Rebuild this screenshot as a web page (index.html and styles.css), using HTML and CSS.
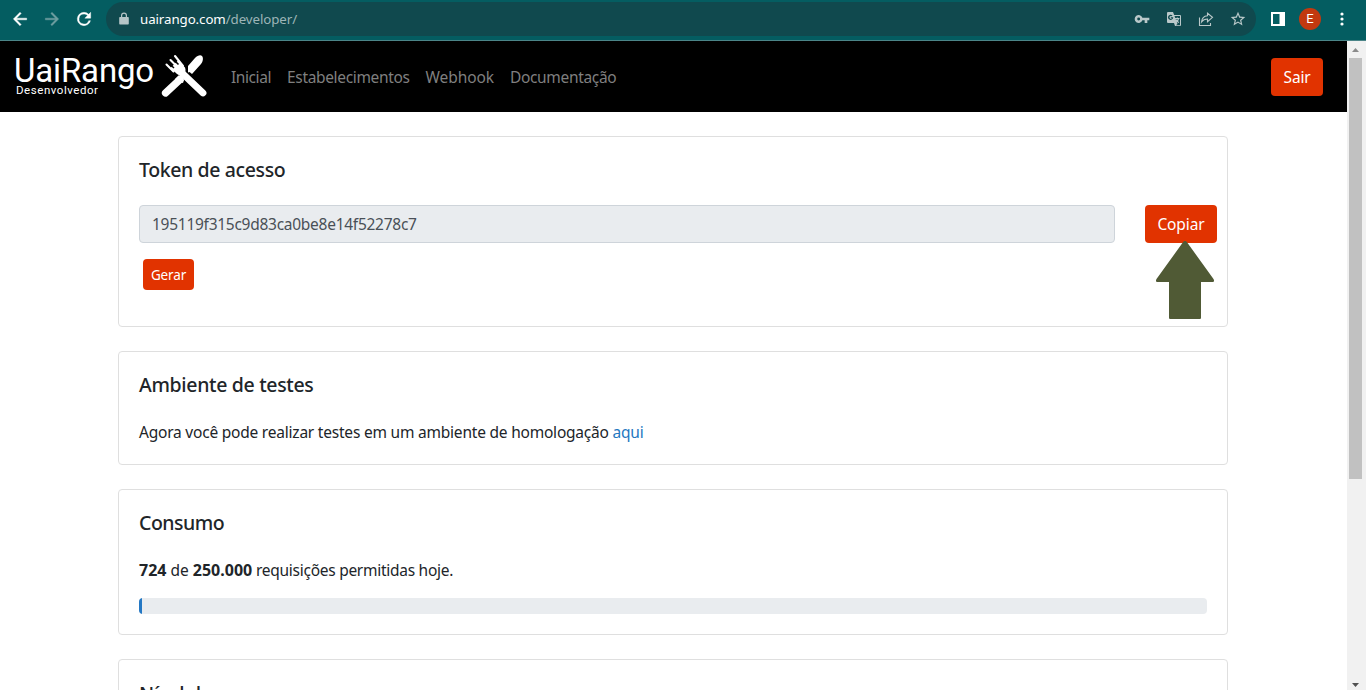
FILE: index.html
```
<!DOCTYPE html>
<html lang="pt-BR">
<head>
<meta charset="utf-8">
<title>UaiRango Desenvolvedor</title>
<link rel="stylesheet" href="styles.css">
</head>
<body>
<header class="browser">
  <svg class="ico" viewBox="0 0 24 24"><path d="M20 11H7.8l5.6-5.6L12 4l-8 8 8 8 1.4-1.4L7.8 13H20z"/></svg>
  <svg class="ico dim" viewBox="0 0 24 24"><path d="M4 11h12.2l-5.6-5.6L12 4l8 8-8 8-1.4-1.4 5.6-5.6H4z"/></svg>
  <svg class="ico" viewBox="0 0 24 24"><path d="M17.65 6.35A7.96 7.96 0 0 0 12 4a8 8 0 1 0 7.73 10h-2.08A6 6 0 1 1 12 6c1.66 0 3.14.69 4.22 1.78L13 11h7V4z"/></svg>
  <div class="address">
    <svg class="lock" viewBox="0 0 10 14"><path d="M1.2 5H2V3.6a3 3 0 0 1 6 0V5h.8c.6 0 1 .4 1 1v5.4c0 .6-.4 1-1 1H1.2c-.6 0-1-.4-1-1V6c0-.6.4-1 1-1zm2 0h3.600V3.600a1.800 1.800 0 0 0-3.600 0z"/></svg>
    <span class="url"><span class="host">uairango.com</span>/developer/</span>
    <div class="tools">
      <svg viewBox="0 0 24 24"><path d="M12.65 10A6 6 0 1 0 12.65 14H16v4h4v-4h3v-4zM7 14.200a2.200 2.200 0 1 1 0-4.400 2.200 2.200 0 0 1 0 4.400z"/></svg>
      <svg viewBox="0 0 16 16"><path fill-rule="evenodd" d="M2 1h5l1.200 3H14a1 1 0 0 1 1 1v9a1 1 0 0 1-1 1H9l-1-3H2a1 1 0 0 1-1-1V2a1 1 0 0 1 1-1zm6.500 4 3 8-1.700 1.200H14V5zM7.200 6.200H4.800v1.100h1.200A1.400 1.400 0 1 1 5.700 5.300l.8-.8a2.600 2.600 0 1 0 .7 1.700z"/><path class="line" d="M9 7.500h4.500M11.300 6.500v1M12.600 7.500c-.4 1.700-1.500 2.900-2.600 3.700M10 8.500c.6 1.500 1.700 2.500 3 3"/></svg>
      <svg viewBox="0 0 16 16"><path class="line" d="M1.500 6.500v8h11V12M9.500 2.200v2.500C5.700 5 3.800 7.500 3.500 11c1.500-2.200 3.300-3 6-3v2.700L14.500 6.300z"/></svg>
      <svg viewBox="1 1 22 22"><path d="m22 9.240-7.190-.62L12 2 9.190 8.630 2 9.240l5.460 4.730L5.820 21 12 17.270 18.180 21l-1.630-7.030zM12 15.400l-3.760 2.270 1-4.280-3.320-2.880 4.380-.38L12 6.100l1.710 4.040 4.380.38-3.320 2.880 1 4.280z"/></svg>
    </div>
  </div>
  <svg class="panel" viewBox="0 0 14 14"><path fill-rule="evenodd" d="M0 0h14v14H0zM2 2v10h6.500V2z"/></svg>
  <div class="avatar">E</div>
  <svg class="dots" viewBox="0 0 4 14"><circle cx="2" cy="2" r="1.600"/><circle cx="2" cy="7" r="1.600"/><circle cx="2" cy="12" r="1.600"/></svg>
</header>
<div class="viewport">
  <div class="page">
    <nav class="navbar">
      <div class="brand">
        <div class="brand-text">
          <span class="brand-name">UaiRango</span>
          <span class="brand-sub">Desenvolvedor</span>
        </div>
        <svg class="cutlery" viewBox="0 0 46 44">
          <path class="stroke-knife" d="M4.500 39 19 25.500"/>
          <path d="m14 25 4-4 5 5-1 3-4-1z"/>
          <path d="M27 12 34 4c2.500-2.500 5.500-3.500 7-2s1.200 5.500-1 8l-9 10-2.500-2-1.500.5z"/>
          <path class="stroke-fork" d="M21 19 42 39"/>
          <path d="m9.500 14 7.500-7.500 7 7c1 2.500.5 5-1 6.500s-4.500 2-7 0z"/>
          <path class="tines" d="m5.500 10.500 7 7M9.500 6l8 8M14 2l8 10"/>
          <path class="gaps" d="m8 9.500 5 4.500M12.500 5.500l5 5"/>
        </svg>
      </div>
      <ul class="menu">
        <li class="m1">Inicial</li><li class="m2">Estabelecimentos</li><li class="m3">Webhook</li><li class="m4">Documentação</li>
      </ul>
      <button class="btn exit">Sair</button>
    </nav>
    <main class="container">
      <section class="card token">
        <h5 class="t1">Token de acesso</h5>
        <div class="row">
          <div class="field"><span>195119f315c9d83ca0be8e14f52278c7</span></div>
          <div class="copy">
            <button class="btn copy-btn">Copiar</button>
            <svg class="arrow" viewBox="0 0 58 78"><path d="M29 0c1 0 1.500.5 2.200 1.500L57.500 38c1 1.800.5 3-1 3H45v35.500c0 1-.5 1.500-1.500 1.500h-29c-1 0-1.500-.5-1.500-1.500V41H1.500c-1.500 0-2-1.200-1-3L26.800 1.500C27.500.5 28 0 29 0z"/></svg>
          </div>
        </div>
        <button class="btn small">Gerar</button>
      </section>
      <section class="card">
        <h5 class="t2">Ambiente de testes</h5>
        <p class="p1">Agora você pode realizar testes em um ambiente de homologação <a>aqui</a></p>
      </section>
      <section class="card">
        <h5 class="t3">Consumo</h5>
        <p class="p2"><b>724</b> de <b>250.000</b><span class="rest"> requisições permitidas hoje.</span></p>
        <div class="progress"><div class="bar" style="width:0.29%"></div></div>
      </section>
      <section class="card">
        <h5 class="t4">Nível de acesso</h5>
      </section>
    </main>
  </div>
  <div class="scroll">
    <svg viewBox="0 0 7 4"><path d="M0 4 3.500 0 7 4z" fill="#8b8b8b"/></svg>
    <div class="thumb"></div>
    <svg class="down" viewBox="0 0 7 4"><path d="M0 0h7L3.500 4z" fill="#505050"/></svg>
  </div>
</div>
</body>
</html>
```
FILE: styles.css
```
* { box-sizing: border-box; }
body { margin: 0; height: 690px; overflow: hidden; font: 15.5px/24px "Noto Sans", sans-serif; color: #212529; background: #fff; }
.browser { height: 41px; background: #045d61; border-bottom: 1px solid #4b8588; display: flex; align-items: center; padding: 0 20px 2px 10px; fill: #fff; }
.ico { width: 20px; height: 20px; margin-right: 12px; flex: none; stroke: #fff; stroke-width: 0.5; }
.dim { fill: #6f9fa1; stroke: #6f9fa1; }
.address { flex: none; width: 1150px; height: 34px; border-radius: 17px; background: #10494e; display: flex; align-items: center; padding: 0 10px 0 13px; }
.lock { width: 10px; height: 14px; fill: #b6c5c7; margin-right: 11px; }
.url { font-size: 13.3px; letter-spacing: -0.08px; color: #9db5b7; }
.host { color: #fff; }
.tools { margin-left: auto; display: flex; gap: 16px; }
.tools svg { width: 16px; height: 16px; fill: #b9c8c9; }
.tools .line { fill: none; stroke: #b9c8c9; stroke-width: 1.1; }
.panel { width: 14px; height: 14px; margin-left: 15px; flex: none; }
.avatar { width: 22px; height: 22px; border-radius: 50%; background: #c2390f; color: #fff; font: 13px/22px Roboto, sans-serif; text-align: center; margin-left: 14px; flex: none; }
.dots { width: 4px; height: 14px; margin-left: 19px; flex: none; }
.viewport { display: flex; height: 649px; }
.page { width: 1347px; flex: none; overflow: hidden; }
.navbar { height: 71px; background: #000; display: flex; align-items: center; padding: 0 24px 0 15px; }
.brand { display: flex; width: 216px; height: 71px; }
.brand-text { width: 146px; padding-top: 15px; color: #fff; display: flex; flex-direction: column; font-family: Roboto, sans-serif; }
.brand-name { font-size: 33px; line-height: 30px; height: 28px; letter-spacing: -0.15px; margin-left: -1px; }
.brand-sub { font-size: 11.5px; line-height: 12px; letter-spacing: 0.55px; margin-left: 1px; }
.cutlery { width: 46px; height: 44px; margin-top: 13px; fill: #fff; }
.stroke-knife, .stroke-fork { stroke: #fff; stroke-width: 7.2; stroke-linecap: round; fill: none; }
.stroke-fork { stroke-width: 6.8; }
.tines { stroke: #fff; stroke-width: 2.1; stroke-linecap: round; }
.gaps { stroke: #000; stroke-width: 1.6; }
.menu { display: flex; gap: 16px; list-style: none; margin: 0; padding: 1px 0 0; color: #7f7f7f; white-space: nowrap; }
.m1 { letter-spacing: -0.42px; }
.m2 { letter-spacing: -0.34px; }
.m3 { letter-spacing: -0.1px; }
.m4 { letter-spacing: -0.32px; }
.btn { font: inherit; color: #fff; background: #e13300; border: 0; border-radius: 4px; height: 38px; padding: 0; }
.exit { width: 52px; margin-left: auto; letter-spacing: -0.2px; }
.container { width: 1110px; margin: 24px 0 0 118px; display: flex; flex-direction: column; gap: 24px; }
.card { border: 1px solid #dfdfdf; border-radius: 4px; padding: 20px; }
h5 { font-size: 19.5px; font-weight: 500; line-height: 24px; margin: 1px 0 23px; white-space: nowrap; letter-spacing: -0.38px; }
.t2 { letter-spacing: -0.33px; }
.t3 { letter-spacing: -0.5px; }
.t4 { margin-top: 2px; }
p { margin: 0; white-space: nowrap; }
.p1 { letter-spacing: -0.215px; }
b { font-size: 16px; }
.rest { letter-spacing: -0.27px; }
.token { height: 191px; padding-right: 10px; }
.row { display: flex; justify-content: space-between; }
.field { width: 976px; height: 38px; border: 1px solid #ced4da; border-radius: 4px; background: #e9ecef; color: #495057; padding: 6px 12px; letter-spacing: -0.27px; }
.copy { position: relative; width: 72px; }
.copy-btn { width: 72px; letter-spacing: -0.1px; }
.arrow { position: absolute; left: 11px; top: 36px; width: 58px; height: 78px; fill: #505a35; }
.small { width: 51px; height: 31px; font-size: 13.5px; letter-spacing: -0.15px; margin: 16px 0 0 4px; display: block; }
a { color: #2478bf; }
.progress { height: 16px; background: #e9ecef; border-radius: 4px; overflow: hidden; margin-top: 16px; }
.bar { height: 16px; background: #2478c4; }
.scroll { flex: 1; background: #f1f1f1; display: flex; flex-direction: column; align-items: center; padding: 7px 2px 3px 0; }
.scroll svg { width: 7px; height: 4px; }
.thumb { width: 13px; height: 421px; margin-top: 6px; background: #c1c1c1; }
.scroll .down { margin-top: auto; }
```
